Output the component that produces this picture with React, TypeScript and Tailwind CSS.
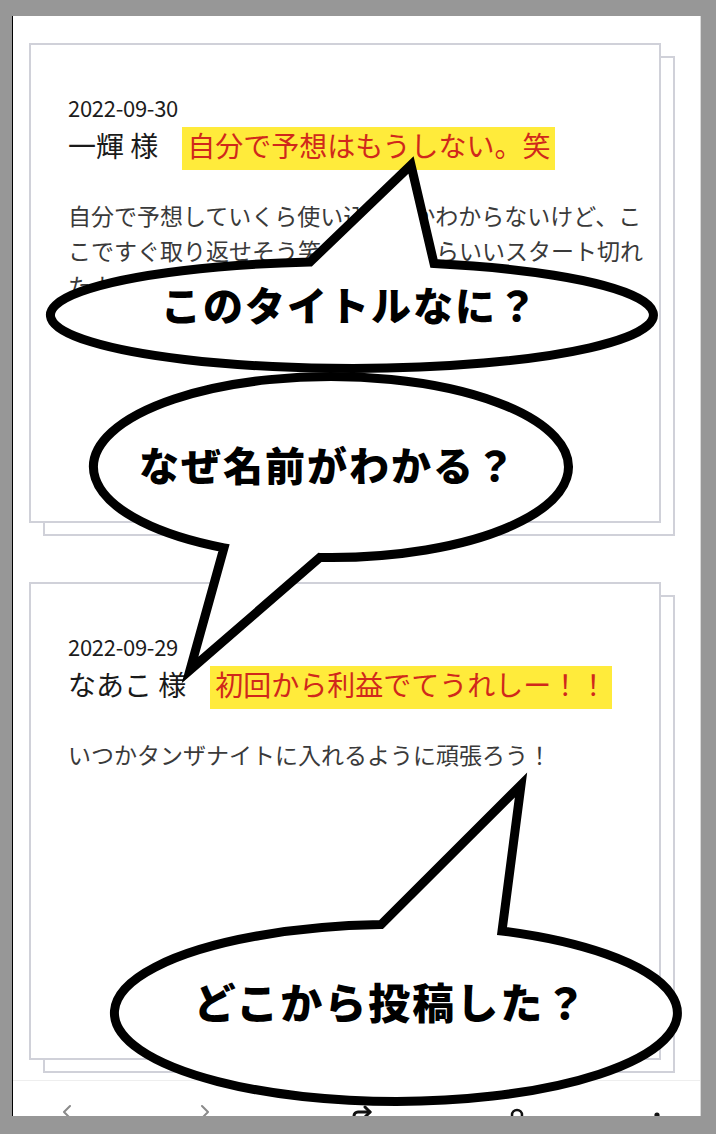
import { ChevronLeft, ChevronRight, Forward } from "lucide-react";

type Review = {
  date: string;
  name: string;
  title: string;
  body: string;
  height: string;
};

const reviews: Review[] = [
  {
    date: "2022-09-30",
    name: "一輝",
    title: "自分で予想はもうしない。笑",
    body: "自分で予想していくら使い込むのかわからないけど、ここですぐ取り返せそう笑。はじめからいいスタート切れたよ！",
    height: "h-[480px]",
  },
  {
    date: "2022-09-29",
    name: "なあこ",
    title: "初回から利益でてうれしー！！",
    body: "いつかタンザナイトに入れるように頑張ろう！",
    height: "h-[478px]",
  },
];

const ReviewCard = ({ review }: { review: Review }) => (
  <div
    className={`${review.height} w-[632px] border-2 border-[#d0d1d9] bg-white pl-[37px] pr-[10px] pt-[51px] shadow-[14px_13px_0_-2px_#fff,14px_13px_0_0_#d0d1d9]`}
  >
    <div className="text-[22px] leading-[22px] tracking-[-0.3px] text-[#1c1c1c]">
      {review.date}
    </div>
    <div className="mt-[9px] flex h-[43px] items-start text-[28px] text-[#1a1a1a]">
      <span className="leading-[36px]">{review.name} 様</span>
      <span className="ml-[24px] h-[43px] bg-[#ffeb3b] px-[5px] pb-[7px] leading-[36px] text-[#d0281b]">
        {review.title}
      </span>
    </div>
    <p className="mt-[28px] text-[23px] leading-[35px] text-[#3a3a3a]">
      {review.body}
    </p>
  </div>
);

// speech bubble outline: ellipse + triangular tail, one path
const bubblePath = (
  cx: number,
  cy: number,
  rx: number,
  ry: number,
  x1: number,
  x2: number,
  tip: [number, number],
  top: boolean
) => {
  const yAt = (x: number) =>
    cy + (top ? -1 : 1) * ry * Math.sqrt(1 - ((x - cx) / rx) ** 2);
  const p1 = `${x1} ${yAt(x1).toFixed(1)}`;
  const p2 = `${x2} ${yAt(x2).toFixed(1)}`;
  return `M${p1} L${tip[0]} ${tip[1]} L${p2} A${rx} ${ry} 0 1 ${top ? 1 : 0} ${p1} Z`;
};

const bubbles = [
  {
    d: bubblePath(352, 315, 301.5, 53.5, 310, 434, [411, 165], true),
    text: "このタイトルなに？",
    x: 350,
    y: 321,
    size: 40,
  },
  {
    d: bubblePath(331, 467, 237.5, 90.5, 224, 320, [190, 670], false),
    text: "なぜ名前がわかる？",
    x: 328,
    y: 481,
    size: 40,
  },
  {
    d: bubblePath(396, 1013, 281.5, 88.5, 381, 502, [521, 785], true),
    text: "どこから投稿した？",
    x: 391,
    y: 1019,
    size: 42,
  },
];

export default function App() {
  return (
    <div className="relative h-[1134px] w-[716px] overflow-hidden bg-[#979797] font-['Noto_Sans_CJK_JP','Noto_Sans',sans-serif]">
      <div className="ml-[12px] mt-[16px] flex h-[1100px] w-[689px] flex-col overflow-hidden border-l border-r border-l-black border-r-[#d8d8d8] bg-white">
        <div className="flex flex-col gap-[59px] pl-[16px] pt-[27px]">
          {reviews.map((r) => (
            <ReviewCard key={r.date} review={r} />
          ))}
        </div>

        {/* browser toolbar, mostly cut off */}
        <div className="mt-[20px] flex border-t border-[#eeeeee] pl-[42px] pt-[19px]">
          <ChevronLeft size={24} strokeWidth={2} className="text-[#8a8a8a]" />
          <ChevronRight size={24} strokeWidth={2} className="ml-[114px] text-[#8a8a8a]" />
          <Forward size={24} strokeWidth={3} className="ml-[133px] text-[#111]" />
          <svg width="24" height="24" viewBox="0 0 24 24" className="ml-[131px]">
            <circle cx="12" cy="15" r="5" fill="none" stroke="#111" strokeWidth="2.5" />
          </svg>
          <svg width="24" height="24" viewBox="0 0 24 24" className="ml-[116px]">
            <circle cx="12" cy="15" r="2.6" fill="#111" />
            <circle cx="12" cy="23" r="2.6" fill="#111" />
          </svg>
        </div>
      </div>

      <svg
        className="pointer-events-none absolute left-0 top-0"
        width="716"
        height="1134"
        viewBox="0 0 716 1134"
      >
        {bubbles.map((b) => (
          <g key={b.text}>
            <path
              d={b.d}
              fill="#fff"
              stroke="#000"
              strokeWidth="9"
              strokeLinejoin="miter"
              strokeMiterlimit="10"
            />
            <text
              x={b.x}
              y={b.y}
              textAnchor="middle"
              fontFamily="'Noto Sans CJK JP', 'Noto Sans', sans-serif"
              fontWeight="900"
              fontSize={b.size}
              letterSpacing="2"
              fill="#000"
            >
              {b.text}
            </text>
          </g>
        ))}
      </svg>
    </div>
  );
}
